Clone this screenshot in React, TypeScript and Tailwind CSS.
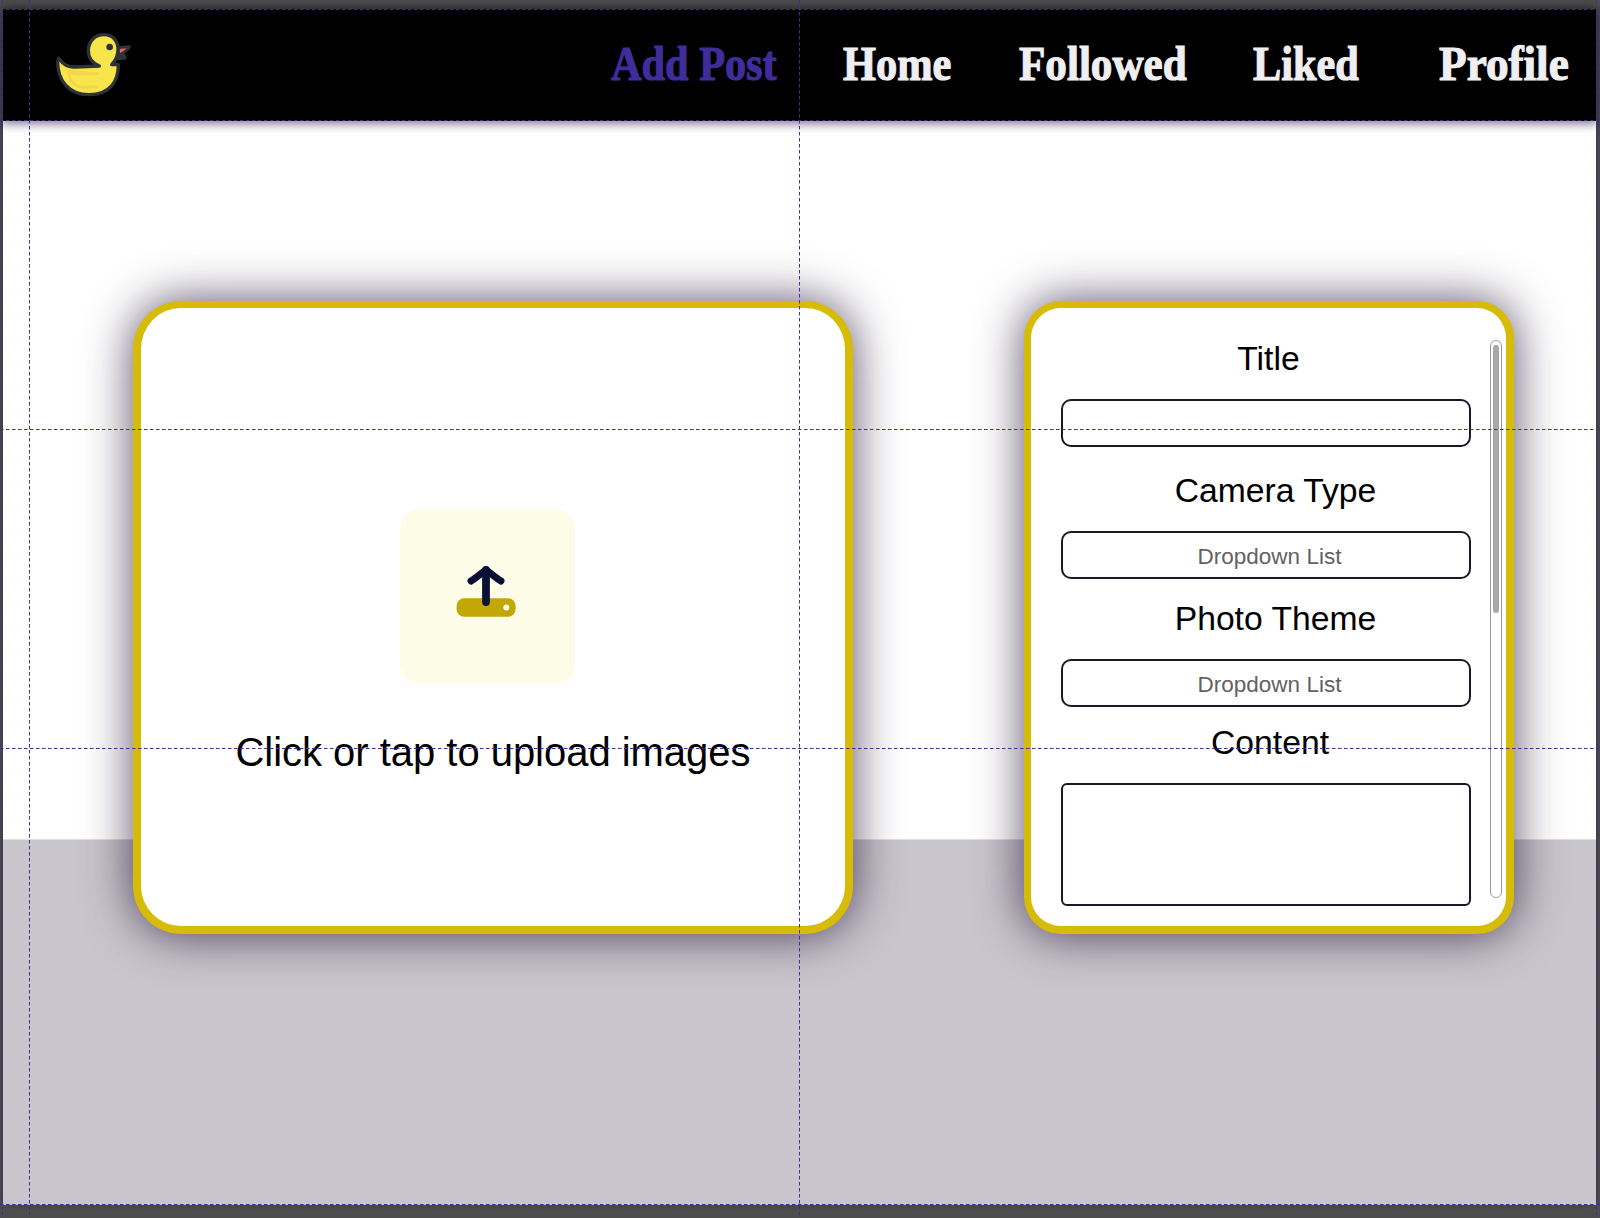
import type { ReactNode } from "react";

const navItems = [
  { label: "Add Post", box: "w-[165px] ml-[479px]", text: "scale-x-[0.863] text-[#3f2d9b]" },
  { label: "Home", box: "w-[108px] ml-[67px]", text: "scale-x-[0.865] text-[#efeff2]" },
  { label: "Followed", box: "w-[168px] ml-[68px]", text: "scale-x-[0.88] text-[#efeff2]" },
  { label: "Liked", box: "w-[105px] ml-[66px]", text: "scale-x-[0.862] text-[#efeff2]" },
  { label: "Profile", box: "w-[130px] ml-[81px]", text: "scale-x-[0.923] text-[#efeff2]" },
];

function Duck() {
  return (
    <svg className="ml-[52px] mt-[23px] h-[65px] w-[77px] shrink-0" viewBox="165 95 231 195" fill="none">
      <path d="M350 138L389 135Q395 140 390 146L373 160Q381 166 380 177Q364 181 350 178Z" fill="#2e3236" />
      <path d="M359 146L379 144Q372 153 360 158Z" fill="#e8625c" />
      <path
        d="M176 174C189 192 201 200 228 200L298 197C277 188 264 172 265 148C267 120 286 103 312 103C338 103 354 121 354 147C354 169 345 183 335 193L355 193C355 242 331 283 266 283C206 283 173 240 173 184Z"
        fill="#f7e64b"
        stroke="#2e3236"
        strokeWidth="10"
        strokeLinejoin="round"
      />
      <path d="M296 220L206 213C208 246 229 263 258 261L294 259M205 213Q220 222 240 221L294 220" stroke="#f2d44f" strokeWidth="8" />
      <circle cx="329" cy="140" r="10" fill="#2e3236" />
    </svg>
  );
}

function UploadIcon() {
  return (
    <svg className="h-[60px] w-[64px]" viewBox="0 0 64 60" fill="none">
      <rect x="2.6" y="34.2" width="59" height="18.6" rx="7.5" fill="#c2a806" />
      <circle cx="52.3" cy="43.5" r="3" fill="#fdfce6" />
      <path d="M32 6V38" stroke="#0a1033" strokeWidth="7.8" strokeLinecap="round" />
      <path
        d="M17 17C21 15 27 9.5 32 5.8C37 9.5 43 15 47 17"
        stroke="#0a1033"
        strokeWidth="7"
        strokeLinecap="round"
        strokeLinejoin="round"
      />
    </svg>
  );
}

function Label({ className, children }: { className: string; children: ReactNode }) {
  return (
    <div className={`h-10 whitespace-nowrap text-center text-[33.7px] leading-10 text-black ${className}`}>{children}</div>
  );
}

function Field({ className, children }: { className: string; children?: ReactNode }) {
  return (
    <div
      className={`flex items-center justify-center border-2 border-[#1d1628] pl-[7px] pt-[3px] text-[22.5px] leading-7 text-[#626262] ${className}`}
    >
      {children}
    </div>
  );
}

const horizontal =
  "absolute left-0 h-px w-full bg-[repeating-linear-gradient(to_right,#3f2f8f_0_3px,#3f2f8f80_3px_4px,transparent_4px_6px)]";
const vertical =
  "absolute top-0 w-px h-full bg-[repeating-linear-gradient(to_bottom,#3f2f8f_0_3px,#3f2f8f80_3px_4px,transparent_4px_6px)]";

function Guides() {
  return (
    <div className="pointer-events-none absolute inset-0 z-20">
      <div className={`${horizontal} top-[9px]`} />
      <div className={`${horizontal} top-[120px]`} />
      <div className={`${horizontal} top-[429px]`} />
      <div className={`${horizontal} top-[748px]`} />
      <div className={`${horizontal} top-[1204px]`} />
      <div className={`${vertical} left-[2px]`} />
      <div className={`${vertical} left-[29px]`} />
      <div className={`${vertical} left-[799px]`} />
      <div className={`${vertical} left-[1596px]`} />
    </div>
  );
}

export default function App() {
  return (
    <div className="relative h-[1218px] w-[1600px] overflow-hidden bg-[#4d4d4d] pl-[3px] pt-[9px] font-['Liberation_Sans',Arial,sans-serif]">
      <div className="flex h-[1196px] w-[1593px] flex-col shadow-[0_-2px_8px_rgba(0,0,0,0.3)]">
        <header className="relative z-10 flex h-[112px] shrink-0 bg-black shadow-[0_2px_9px_1px_rgba(30,10,60,0.55)]">
          <Duck />
          <nav className="flex pt-[25px]">
            {navItems.map((item) => (
              <div key={item.label} className={`shrink-0 ${item.box}`}>
                <span
                  className={`inline-block origin-left whitespace-nowrap font-['Liberation_Serif','Times_New_Roman',serif] text-[49px] font-bold leading-[60px] [-webkit-text-stroke:1.2px_currentColor] ${item.text}`}
                >
                  {item.label}
                </span>
              </div>
            ))}
          </nav>
        </header>

        <main className="flex flex-1 items-start bg-[linear-gradient(to_bottom,#fff_718px,#e6e0cf_718px,#e6e0cf_719px,#c8c5cc_719px)] pl-[130px] pt-[180px]">
          <section className="flex h-[633px] w-[720px] shrink-0 flex-col items-center rounded-[48px] border-x-8 border-b-8 border-t-[7px] border-[#d7bb09] bg-white pt-[201px] shadow-[0_0_48px_rgba(22,0,38,0.7)]">
            <div className="mr-[11px] flex h-[175px] w-[175px] items-center justify-center rounded-[20px] bg-[#fdfce6] pb-[5px] pr-[3px]">
              <UploadIcon />
            </div>
            <p className="mt-[43px] whitespace-nowrap text-[40px] leading-[50px] tracking-[-0.03px] text-black">
              Click or tap to upload images
            </p>
          </section>

          <section className="ml-[171px] flex h-[633px] w-[490px] shrink-0 rounded-[37px] border-b-8 border-l-[7px] border-r-8 border-t-[7px] border-[#d7bb09] bg-white pl-[30px] shadow-[0_0_48px_rgba(22,0,38,0.7)]">
            <div className="w-[410px] pt-[30px]">
              <Label className="pl-[5px]">Title</Label>
              <Field className="mt-[21px] h-12 rounded-[10px]" />
              <Label className="mt-[23px] pl-[19px]">Camera Type</Label>
              <Field className="mt-[21px] h-12 rounded-[10px]">Dropdown List</Field>
              <Label className="mt-[19px] pl-[19px]">Photo Theme</Label>
              <Field className="mt-[21px] h-12 rounded-[10px]">Dropdown List</Field>
              <Label className="mt-[15px] pl-[8px]">Content</Label>
              <Field className="mt-[21px] h-[123px] rounded-[6px]" />
            </div>
            <div className="ml-[19px] mt-[32px] h-[558px] w-[12px] rounded-full border border-[#989898] px-[2px] pt-[4px]">
              <div className="h-[268px] w-[6px] rounded-full bg-[#a8a8a8]" />
            </div>
          </section>
        </main>
      </div>
      <Guides />
    </div>
  );
}
